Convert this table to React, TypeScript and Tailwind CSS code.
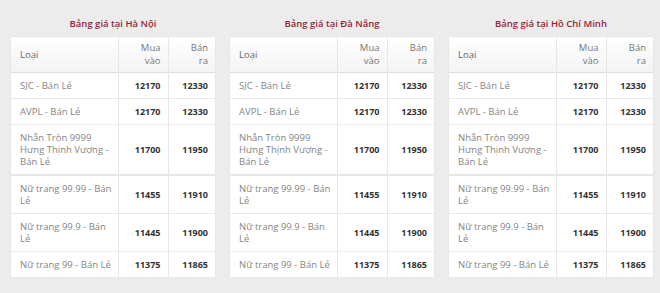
import React from "react"

type Row = { name: React.ReactNode; buy: string; sell: string; thick?: boolean }

const rows: Row[] = [
	{ name: "SJC - Bán Lẻ", buy: "12170", sell: "12330" },
	{ name: "AVPL - Bán Lẻ", buy: "12170", sell: "12330" },
	{
		name: (
			<>
				Nhẫn Tròn 9999
				<br />
				Hưng Thịnh Vượng -
				<br />
				Bán Lẻ
			</>
		),
		buy: "11700",
		sell: "11950",
		thick: true,
	},
	{
		name: (
			<>
				Nữ trang 99.99 - Bán
				<br />
				Lẻ
			</>
		),
		buy: "11455",
		sell: "11910",
	},
	{
		name: (
			<>
				Nữ trang 99.9 - Bán
				<br />
				Lẻ
			</>
		),
		buy: "11445",
		sell: "11900",
	},
	{ name: "Nữ trang 99 - Bán Lẻ", buy: "11375", sell: "11865" },
]

const cities = ["Hà Nội", "Đà Nẵng", "Hồ Chí Minh"]

function PriceTable({ city }: { city: string }) {
	return (
		<div className="w-[204px] shrink-0">
			<h3 className="text-center text-[9.5px] leading-[13px] font-semibold text-[#9b2339] mb-[7px]">
				Bảng giá tại {city}
			</h3>
			<table className="w-full border-collapse bg-white shadow-[0_0_1px_rgba(0,0,0,0.12)] table-fixed">
				<colgroup>
					<col className="w-[107px]" />
					<col className="w-[50px]" />
					<col className="w-[47px]" />
				</colgroup>
				<thead>
					<tr className="bg-gradient-to-b from-white to-[#f3f3f3] border-b border-[#dcdcdc]">
						<th className="text-left font-normal text-[9.5px] text-[#666] pl-[9px] py-[5px] leading-[12px]">
							Loại
						</th>
						<th className="text-right font-normal text-[9.5px] text-[#777] pr-[7px] py-[5px] leading-[12.5px] border-l border-[#e6e6e6]">
							Mua
							<br />
							vào
						</th>
						<th className="text-right font-normal text-[9.5px] text-[#777] pr-[7px] py-[5px] leading-[12.5px] border-l border-[#e6e6e6]">
							Bán
							<br />
							ra
						</th>
					</tr>
				</thead>
				<tbody>
					{rows.map((r, i) => (
						<tr
							key={i}
							className={
								i === rows.length - 1
									? ""
									: r.thick
										? "border-b-2 border-[#e6e6e6]"
										: "border-b border-[#e9e9e9]"
							}
						>
							<td className="pl-[9px] pr-[1px] py-[6.5px] leading-[12px] text-[9.5px] text-[#858585] whitespace-nowrap">
								{r.name}
							</td>
							<td className="text-right pr-[7px] py-[6.5px] leading-[12px] font-bold text-[#333] border-l border-[#e6e6e6]">
								{r.buy}
							</td>
							<td className="text-right pr-[7px] py-[6.5px] leading-[12px] font-bold text-[#333] border-l border-[#e6e6e6]">
								{r.sell}
							</td>
						</tr>
					))}
				</tbody>
			</table>
		</div>
	)
}

export default function App() {
	return (
		<div
			className="w-[660px] h-[293px] bg-[#ececec] text-[9px] overflow-hidden"
			style={{ fontFamily: '"Open Sans", "Noto Sans", sans-serif' }}
		>
			<div className="flex gap-[15px] pl-[11px] pt-[17px]">
				{cities.map((c) => (
					<PriceTable key={c} city={c} />
				))}
			</div>
		</div>
	)
}
